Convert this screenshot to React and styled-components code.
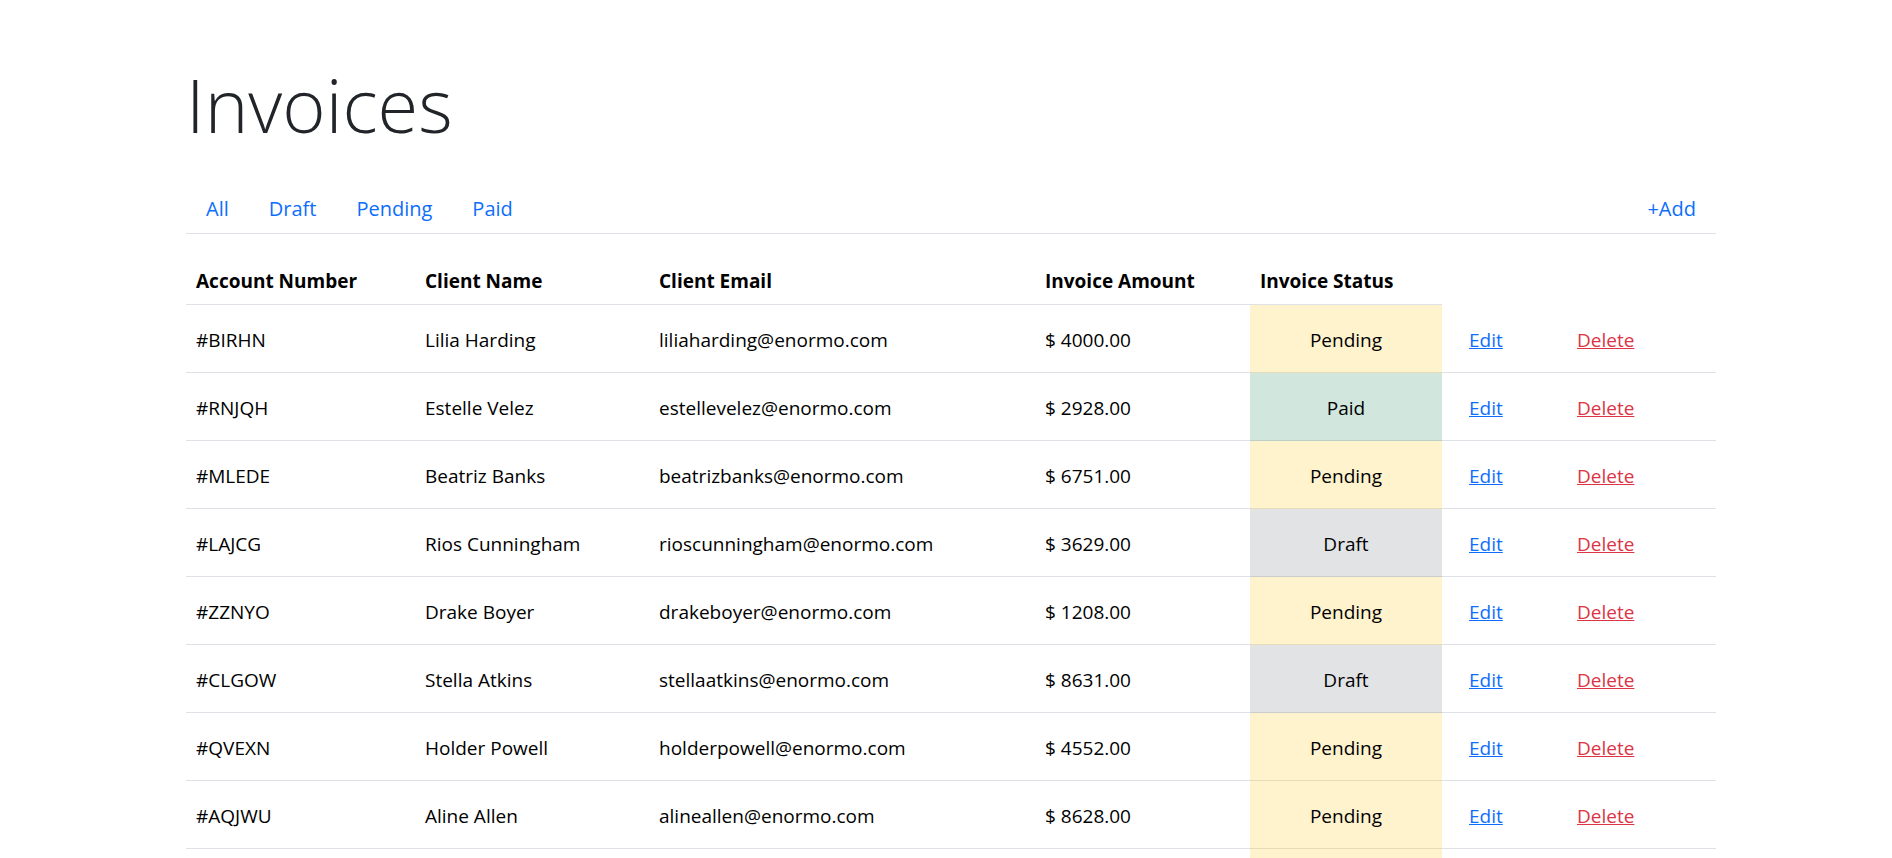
import React, { useState } from "react";
import styled, { createGlobalStyle } from "styled-components";

const GlobalStyle = createGlobalStyle`
  body {
    margin: 0;
    background: #fff;
    font-family: "Open Sans", "Noto Sans", "Liberation Sans", sans-serif;
    font-size: 19px;
    line-height: 1.5;
    color: #212529;
  }
`;

const invoices = [
  { account: "#BIRHN", name: "Lilia Harding", email: "liliaharding@enormo.com", amount: 4000, status: "Pending" },
  { account: "#RNJQH", name: "Estelle Velez", email: "estellevelez@enormo.com", amount: 2928, status: "Paid" },
  { account: "#MLEDE", name: "Beatriz Banks", email: "beatrizbanks@enormo.com", amount: 6751, status: "Pending" },
  { account: "#LAJCG", name: "Rios Cunningham", email: "rioscunningham@enormo.com", amount: 3629, status: "Draft" },
  { account: "#ZZNYO", name: "Drake Boyer", email: "drakeboyer@enormo.com", amount: 1208, status: "Pending" },
  { account: "#CLGOW", name: "Stella Atkins", email: "stellaatkins@enormo.com", amount: 8631, status: "Draft" },
  { account: "#QVEXN", name: "Holder Powell", email: "holderpowell@enormo.com", amount: 4552, status: "Pending" },
  { account: "#AQJWU", name: "Aline Allen", email: "alineallen@enormo.com", amount: 8628, status: "Pending" },
  { account: "#TQYKD", name: "Mcintyre Barr", email: "mcintyrebarr@enormo.com", amount: 5120, status: "Pending" },
];

//bootstrap-ish table colours for each status
const statusColors = {
  Pending: { bg: "#fff3cd", border: "#e6dbb9" },
  Paid: { bg: "#d1e7dd", border: "#bcd0c7" },
  Draft: { bg: "#e2e3e5", border: "#cbccce" },
};

const App = () => {
  const [filter, setFilter] = useState("All");

  return (
    <Wrapper>
      <GlobalStyle />
      <Title>Invoices</Title>
      <Nav>
        <Tabs>
          {["All", "Draft", "Pending", "Paid"].map((tab) => (
            <NavLink key={tab} href="#" onClick={(ev) => { ev.preventDefault(); setFilter(tab); }}>
              {tab}
            </NavLink>
          ))}
        </Tabs>
        <NavLink href="#" onClick={(ev) => ev.preventDefault()}>+Add</NavLink>
      </Nav>
      <Table>
        <colgroup>
          <col style={{ width: 229 }} />
          <col style={{ width: 234 }} />
          <col style={{ width: 386 }} />
          <col style={{ width: 215 }} />
          <col style={{ width: 192 }} />
          <col style={{ width: 125 }} />
          <col />
        </colgroup>
        <thead>
          <tr>
            <Th>Account Number</Th>
            <Th>Client Name</Th>
            <Th>Client Email</Th>
            <Th>Invoice Amount</Th>
            <Th>Invoice Status</Th>
            <Th $blank />
            <Th $blank />
          </tr>
        </thead>
        <tbody>
          {invoices
            .filter((inv) => filter === "All" || inv.status === filter)
            .map((inv) => (
              <tr key={inv.account}>
                <Td>{inv.account}</Td>
                <Td>{inv.name}</Td>
                <Td>{inv.email}</Td>
                <Td>$ {inv.amount.toFixed(2)}</Td>
                <StatusCell $status={inv.status}>{inv.status}</StatusCell>
                <ActionCell $indent={27}>
                  <ActionLink href="#">Edit</ActionLink>
                </ActionCell>
                <ActionCell $indent={10}>
                  <ActionLink href="#" $danger>Delete</ActionLink>
                </ActionCell>
              </tr>
            ))}
        </tbody>
      </Table>
    </Wrapper>
  );
};

export default App;

const Wrapper = styled.div`
  width: 1530px;
  margin: 0 0 0 186px;
`;

const Title = styled.h1`
  margin: 60px 0 0;
  font-size: 74px;
  font-weight: 300;
  line-height: 90px;
  color: #212529;
`;

const Nav = styled.nav`
  display: flex;
  justify-content: space-between;
  align-items: center;
  margin-top: 34px;
  border-bottom: 1px solid #dee2e6;
`;

const Tabs = styled.div`
  display: flex;
`;

const NavLink = styled.a`
  display: block;
  padding: 10px 20px 9px;
  color: #0d6efd;
  text-decoration: none;
  font-size: 20px;
  line-height: 30px;
`;

const Table = styled.table`
  width: 100%;
  margin-top: 20px;
  border-collapse: collapse;
  table-layout: fixed;
`;

const Th = styled.th`
  text-align: left;
  font-weight: 700;
  padding: 12px 10px 8px;
  line-height: 30px;
  border-bottom: ${(p) => (p.$blank ? "none" : "1px solid #dee2e6")};
  color: #000;
`;

const Td = styled.td`
  padding: 20px 10px 17px;
  line-height: 30px;
  border-bottom: 1px solid #dee2e6;
  color: #000;
  white-space: nowrap;
`;

const StatusCell = styled(Td)`
  text-align: center;
  background: ${(p) => statusColors[p.$status].bg};
  border-bottom-color: ${(p) => statusColors[p.$status].border};
`;

const ActionCell = styled(Td)`
  padding-left: ${(p) => p.$indent}px;
`;

const ActionLink = styled.a`
  color: ${(p) => (p.$danger ? "#dc3545" : "#0d6efd")};
  text-decoration: underline;
`;
